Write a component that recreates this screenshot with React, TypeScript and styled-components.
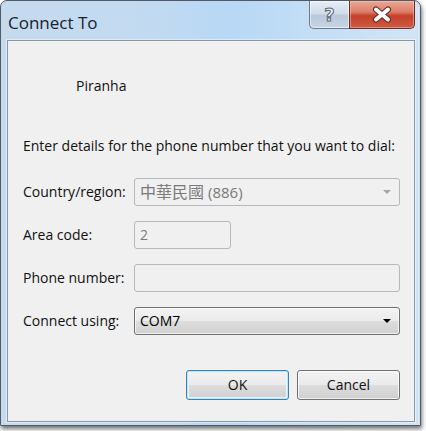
import styled, { createGlobalStyle } from 'styled-components';

const GlobalStyle = createGlobalStyle`
  html, body {
    margin: 0;
    padding: 0;
    background: #ffffff;
  }
  body {
    font-family: "Open Sans", "Noto Sans", "Noto Sans CJK TC", sans-serif;
  }
`;

const Desktop = styled.div`
  width: 426px;
  height: 431px;
  overflow: hidden;
`;

const Window = styled.div`
  box-sizing: border-box;
  width: 421px;
  height: 426px;
  border: 1px solid #4f5a66;
  border-radius: 7px 7px 0 0;
  padding: 0 5px 3px 6px;
  display: flex;
  flex-direction: column;
  background: linear-gradient(90deg, #c6daee 0%, #c2daf1 35%, #b8d8f5 55%, #c4def5 75%, #d3e5f5 100%);
  box-shadow: 1px 3px 4px rgba(0, 0, 0, 0.55);
`;

const TitleBar = styled.div`
  height: 39px;
  display: flex;
  align-items: flex-start;
  justify-content: space-between;
  flex-shrink: 0;
`;

const Title = styled.div`
  padding: 11px 0 0 1px;
  font-family: "Open Sans", "Noto Sans", sans-serif;
  font-size: 17px;
  line-height: 22px;
  color: #18222e;
`;

const CaptionButtons = styled.div`
  display: flex;
`;

const HelpButton = styled.div`
  box-sizing: border-box;
  width: 40px;
  height: 28px;
  border: 1px solid #6a7b8e;
  border-top: none;
  border-right: none;
  border-radius: 0 0 0 5px;
  background: linear-gradient(180deg, #e6edf5 0%, #d2dde9 45%, #b9c9da 55%, #c6d5e4 100%);
  box-shadow: inset 0 0 0 1px rgba(255, 255, 255, 0.55);
  display: flex;
  align-items: center;
  justify-content: center;
  font-family: "DejaVu Sans", sans-serif;
  font-weight: bold;
  font-size: 18px;
  color: #eef2f6;
  -webkit-text-stroke: 1px #5c6673;
`;

const CloseButton = styled.div`
  box-sizing: border-box;
  width: 66px;
  height: 28px;
  border: 1px solid #6e2a1e;
  border-top: none;
  border-radius: 0 0 5px 0;
  background: linear-gradient(180deg, #e9a897 0%, #dc7f69 40%, #c4402a 55%, #cf5a43 100%);
  box-shadow: inset 0 0 0 1px rgba(255, 210, 200, 0.45);
  display: flex;
  align-items: center;
  justify-content: center;
`;

const Client = styled.div`
  flex: 1;
  box-sizing: border-box;
  border: 1px solid #8897a8;
  box-shadow: 0 0 0 1px rgba(255, 255, 255, 0.45);
  background: #f0f0f0;
  display: flex;
  flex-direction: column;
  font-family: "Open Sans", "Noto Sans", "Noto Sans CJK TC", sans-serif;
  font-size: 14px;
  color: #111;
`;

const Header = styled.div`
  margin: 35px 0 0 68px;
  line-height: 20px;
`;

const Prompt = styled.div`
  margin: 40px 0 0 15px;
  line-height: 20px;
`;

const Form = styled.div`
  margin: 22px 14px 0 15px;
  display: grid;
  grid-template-columns: 111px 1fr;
  grid-auto-rows: 28px;
  row-gap: 15px;
  align-items: center;
`;

const Label = styled.div`
  line-height: 20px;
`;

const Field = styled.div<{ $width?: number; $enabled?: boolean }>`
  box-sizing: border-box;
  height: 28px;
  width: ${({ $width }) => ($width ? `${$width}px` : '100%')};
  border: 1px solid ${({ $enabled }) => ($enabled ? '#707070' : '#b4b8bc')};
  border-radius: 3px;
  background: ${({ $enabled }) =>
    $enabled
      ? 'linear-gradient(180deg, #f3f3f3 0%, #ebebeb 48%, #dddddd 52%, #d1d1d1 100%)'
      : '#f0f0f0'};
  box-shadow: ${({ $enabled }) => ($enabled ? 'inset 0 0 0 1px rgba(255,255,255,0.7)' : 'none')};
  color: ${({ $enabled }) => ($enabled ? '#000' : '#7a7a7a')};
  display: flex;
  align-items: center;
  justify-content: space-between;
  padding: 0 8px 0 5px;
  line-height: 20px;
`;

const Cjk = styled.span`
  font-family: "Noto Sans CJK TC", sans-serif;
  font-size: 16px;
  margin-right: 4px;
`;

const Code = styled.span`
  font-size: 15px;
`;

const Arrow = styled.span<{ $enabled?: boolean }>`
  width: 0;
  height: 0;
  border-left: 4px solid transparent;
  border-right: 4px solid transparent;
  border-top: 4px solid ${({ $enabled }) => ($enabled ? '#000' : '#a5a5a5')};
`;

const Footer = styled.div`
  margin: 35px 14px 0 0;
  display: flex;
  justify-content: flex-end;
  gap: 8px;
`;

const Button = styled.div<{ $default?: boolean }>`
  box-sizing: border-box;
  width: 103px;
  height: 30px;
  border: 1px solid ${({ $default }) => ($default ? '#3c7fb1' : '#707070')};
  border-radius: 3px;
  background: linear-gradient(180deg, #f2f2f2 0%, #ebebeb 48%, #dddddd 52%, #cfcfcf 100%);
  box-shadow: ${({ $default }) =>
    $default ? 'inset 0 0 0 1px #bfe4fa, inset 0 0 0 2px #e6f5fd' : 'inset 0 0 0 1px rgba(255,255,255,0.75)'};
  display: flex;
  align-items: center;
  justify-content: center;
  line-height: 20px;
`;

export default function App() {
  return (
    <Desktop>
      <GlobalStyle />
      <Window>
        <TitleBar>
          <Title>Connect To</Title>
          <CaptionButtons>
            <HelpButton>?</HelpButton>
            <CloseButton>
              <svg width="22" height="17" viewBox="0 0 22 17">
                <path d="M5 3.5 L17 13.5 M17 3.5 L5 13.5" stroke="#5a2a22" strokeWidth="6" strokeLinecap="round" />
                <path d="M5 3.5 L17 13.5 M17 3.5 L5 13.5" stroke="#ffffff" strokeWidth="4" strokeLinecap="round" />
              </svg>
            </CloseButton>
          </CaptionButtons>
        </TitleBar>
        <Client>
          <Header>Piranha</Header>
          <Prompt>Enter details for the phone number that you want to dial:</Prompt>
          <Form>
            <Label>Country/region:</Label>
            <Field>
              <span>
                <Cjk>中華民國</Cjk>
                <Code>(886)</Code>
              </span>
              <Arrow />
            </Field>
            <Label>Area code:</Label>
            <Field $width={97}>2</Field>
            <Label>Phone number:</Label>
            <Field />
            <Label>Connect using:</Label>
            <Field $enabled>
              <span>COM7</span>
              <Arrow $enabled />
            </Field>
          </Form>
          <Footer>
            <Button $default>OK</Button>
            <Button>Cancel</Button>
          </Footer>
        </Client>
      </Window>
    </Desktop>
  );
}
